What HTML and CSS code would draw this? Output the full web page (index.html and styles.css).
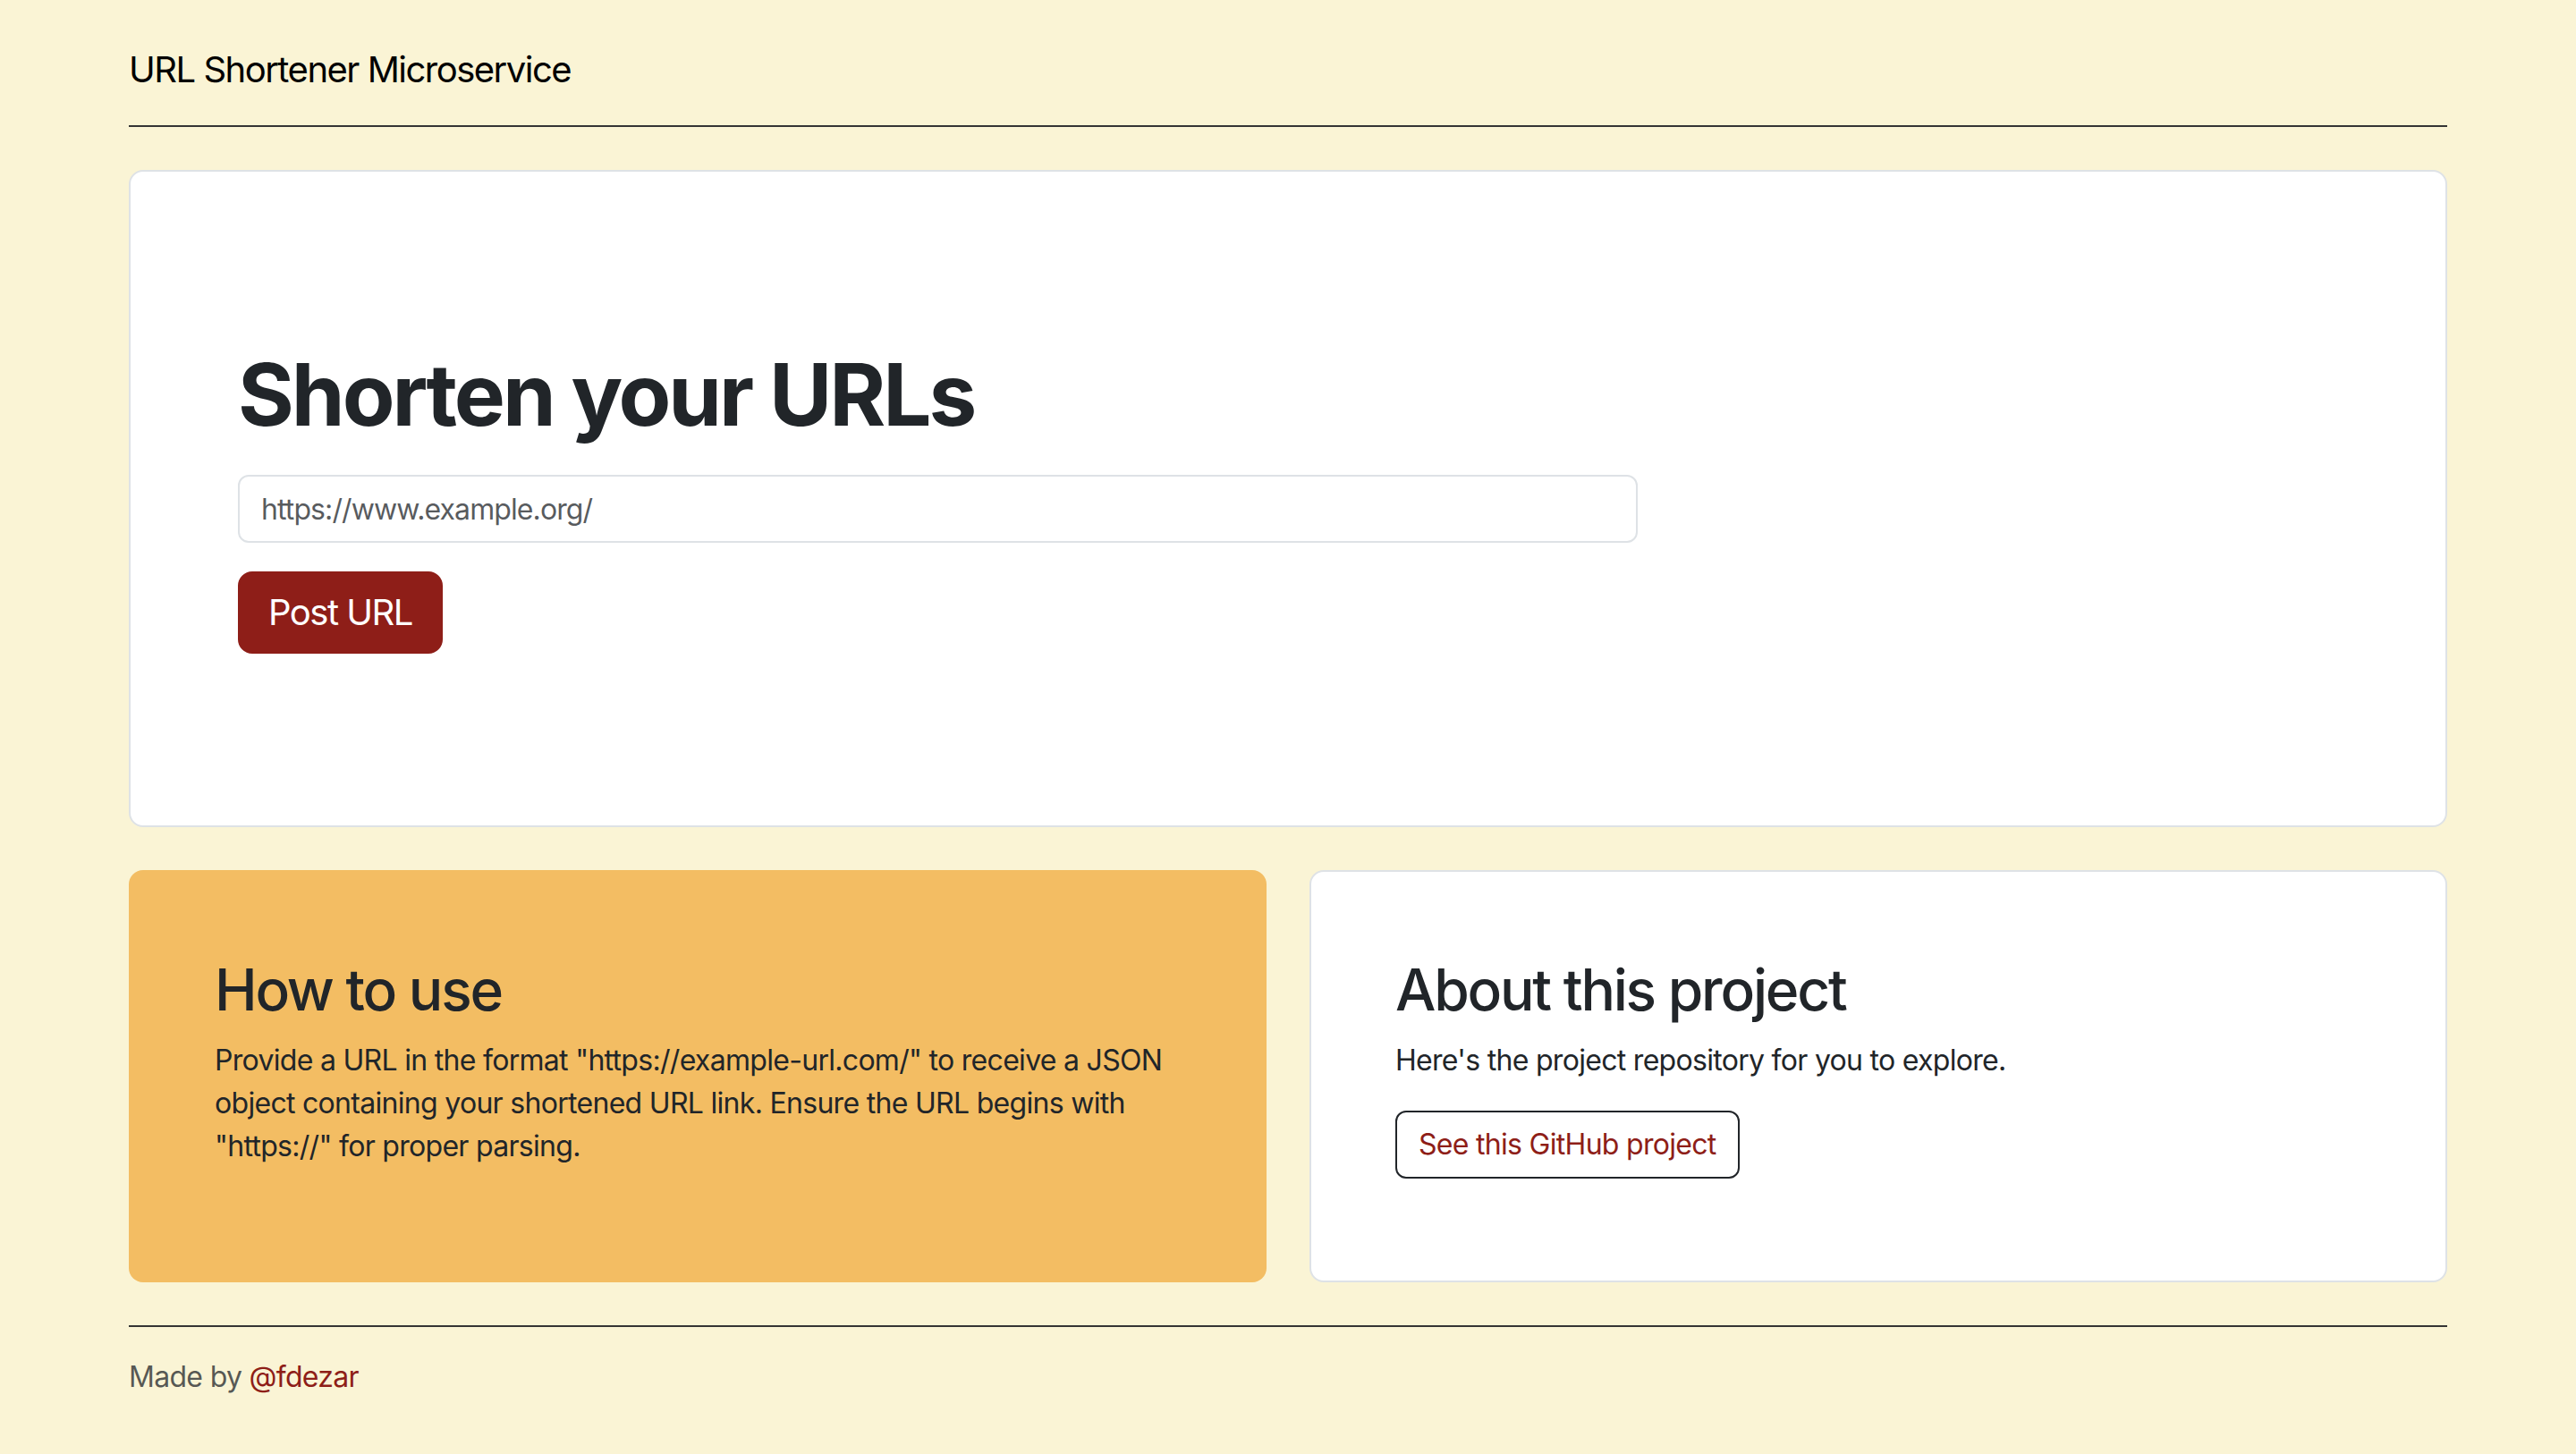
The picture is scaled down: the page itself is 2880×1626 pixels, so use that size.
FILE: index.html
```html
<!DOCTYPE html>
<html lang="en">
<head>
<meta charset="utf-8">
<title>URL Shortener Microservice</title>
<link rel="stylesheet" href="styles.css">
</head>
<body>
<main class="container">
  <header class="site-header">
    <a href="#" class="brand">URL Shortener Microservice</a>
  </header>

  <section class="hero">
    <h1 class="hero-title">Shorten your URLs</h1>
    <form class="hero-form">
      <input class="url-input" type="text" placeholder="https://www.example.org/">
      <button class="btn-post" type="button">Post URL</button>
    </form>
  </section>

  <div class="cards">
    <section class="card card-warm">
      <h2 class="card-title">How to use</h2>
      <p class="card-text">Provide a URL in the format "https://example-url.com/" to receive a JSON object containing your shortened URL link. Ensure the URL begins with "https://" for proper parsing.</p>
    </section>
    <section class="card card-light">
      <h2 class="card-title">About this project</h2>
      <p class="card-text">Here's the project repository for you to explore.</p>
      <a class="btn-outline" href="#">See this GitHub project</a>
    </section>
  </div>

  <footer class="site-footer">
    Made by <a href="#" class="footer-link">@fdezar</a>
  </footer>
</main>
</body>
</html>
```

FILE: styles.css
```css
* { box-sizing: border-box; }

html, body {
  margin: 0;
  padding: 0;
}

body {
  background: #faf4d5;
  font-family: Inter, "Noto Sans", "Liberation Sans", sans-serif;
  font-size: 32px;
  line-height: 1.5;
  letter-spacing: -0.7px;
  color: #212529;
}

.container {
  max-width: 2592px;
  margin: 0 auto;
  padding: 48px 0;
}

.site-header {
  padding-bottom: 32px;
  margin-bottom: 48px;
  border-bottom: 2px solid #343434;
}

.brand {
  display: block;
  font-size: 40px;
  line-height: 60px;
  letter-spacing: -1.5px;
  color: #000;
  text-decoration: none;
}

.hero {
  background: #fff;
  border: 2px solid #dee2e6;
  border-radius: 16px;
  padding: 192px 120px;
  margin-bottom: 48px;
}

.hero-title {
  margin: 0 0 32px;
  font-size: 96px;
  font-weight: 700;
  line-height: 1.2;
  letter-spacing: -3px;
  color: #212529;
}

.hero-form {
  display: flex;
  flex-direction: column;
  align-items: flex-start;
  gap: 32px;
}

.url-input {
  width: 66.667%;
  height: 76px;
  padding: 12px 24px;
  font-family: inherit;
  font-size: 32px;
  line-height: 48px;
  letter-spacing: -0.9px;
  color: #212529;
  background: #fff;
  border: 2px solid #dee2e6;
  border-radius: 12px;
  outline: none;
}

.url-input::placeholder {
  color: rgba(33, 37, 41, 0.75);
  opacity: 1;
}

.btn-post {
  padding: 14px 32px;
  font-family: inherit;
  font-size: 40px;
  line-height: 60px;
  letter-spacing: -1.5px;
  color: #fff;
  background: #8e1e18;
  border: 2px solid #8e1e18;
  border-radius: 16px;
  cursor: pointer;
}

.cards {
  display: grid;
  grid-template-columns: 1fr 1fr;
  gap: 48px;
}

.card {
  padding: 96px;
  border-radius: 16px;
}

.card-warm {
  background: #f3bd63;
}

.card-light {
  background: #fff;
  border: 2px solid #dee2e6;
  padding: 94px;
}

.card-title {
  margin: 0 0 16px;
  font-size: 64px;
  font-weight: 500;
  line-height: 1.2;
  letter-spacing: -2.2px;
  color: #212529;
}

.card-text {
  margin: 0 0 32px;
  font-size: 32px;
  line-height: 48px;
}

.btn-outline {
  display: inline-block;
  padding: 12px 24px;
  font-size: 32px;
  line-height: 48px;
  color: #8e1e18;
  text-decoration: none;
  border: 2px solid #212529;
  border-radius: 12px;
}

.site-footer {
  margin-top: 48px;
  padding-top: 32px;
  border-top: 2px solid #343434;
  font-size: 32px;
  line-height: 48px;
  color: rgba(33, 37, 41, 0.75);
}

.footer-link {
  color: #8e1e18;
  text-decoration: none;
}
```
